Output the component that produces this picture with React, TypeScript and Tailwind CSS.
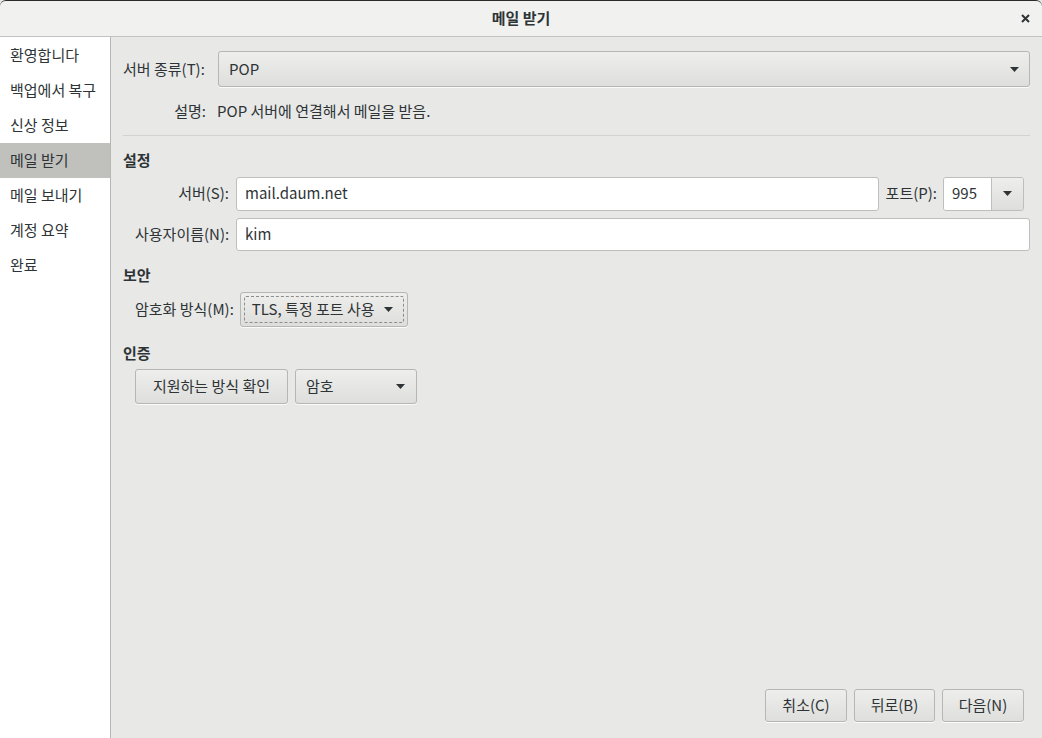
import React from 'react';

const Arrow: React.FC = () => (
  <svg width="9" height="5" viewBox="0 0 9 5" className="shrink-0">
    <path d="M0 0h9L4.5 5z" fill="#2e3436" />
  </svg>
);

const btn =
  'border border-[#b6b6b3] rounded-[3px] bg-gradient-to-b from-[#eeeeec] to-[#dededc] shadow-[0_1px_0_rgba(255,255,255,0.8)]';

const sideItems = ['환영합니다', '백업에서 복구', '신상 정보', '메일 받기', '메일 보내기', '계정 요약', '완료'];

const Sidebar: React.FC = () => (
  <div className="w-[111px] shrink-0 bg-white border-r border-[#b6b6b3] pt-[1px]">
    {sideItems.map(item => (
      <div
        key={item}
        className={`h-[35px] pl-[10px] flex items-center whitespace-nowrap ${item === '메일 받기' ? 'bg-[#c0c0bd]' : ''}`}
      >
        {item}
      </div>
    ))}
  </div>
);

const App: React.FC = () => {
  return (
    <div
      className="w-[1042px] h-[738px] flex flex-col bg-[#e8e8e7] text-[#2e3436] text-[15px] overflow-hidden"
      style={{ fontFamily: '"Noto Sans CJK KR", "Noto Sans", sans-serif' }}
    >
      <div className="h-[37px] shrink-0 bg-[#f1f1f0] border-t border-[#2b2b2b] rounded-t-[6px] border-b border-b-[#c2c2bf] grid grid-cols-[1fr_auto_1fr] items-center">
        <div />
        <div className="font-bold">메일 받기</div>
        <div className="flex justify-end pr-[12px]">
          <svg width="9" height="9" viewBox="0 0 9 9">
            <path d="M1 1l7 7M8 1L1 8" stroke="#2e3436" strokeWidth="2" />
          </svg>
        </div>
      </div>

      <div className="flex flex-1 min-h-0">
        <Sidebar />

        <main className="flex-1 flex flex-col pl-[12px] pr-[12px] pt-[14px] pb-[16px]">
          <div className="grid grid-cols-[83px_1fr] gap-x-[12px] items-center">
            <div className="whitespace-nowrap">서버 종류(T):</div>
            <div className={`${btn} h-[36px] flex items-center justify-between pl-[10px] pr-[10px]`}>
              <span>POP</span>
              <Arrow />
            </div>
            <div className="text-right mt-[13px]">설명:</div>
            <div className="mt-[13px] -ml-[1px]">POP 서버에 연결해서 메일을 받음.</div>
          </div>

          <div className="mt-[12px] h-px bg-[#d2d2cf]" />

          <div className="font-bold mt-[12px] leading-[24px]">설정</div>
          <div className="pl-[12px] mt-[5px] flex flex-col gap-[7px]">
            <div className="flex items-center">
              <div className="w-[94px] text-right shrink-0 whitespace-nowrap">서버(S):</div>
              <div className="ml-[7px] flex-1 h-[34px] bg-white border border-[#bebebb] rounded-[3px] flex items-center pl-[8px]">
                mail.daum.net
              </div>
              <div className="ml-[7px] whitespace-nowrap">포트(P):</div>
              <div className="ml-[6px] mr-[6px] w-[81px] h-[34px] flex border border-[#bebebb] rounded-[3px] overflow-hidden">
                <div className="w-[47px] bg-white flex items-center pl-[8px]">995</div>
                <div className="flex-1 border-l border-[#bebebb] bg-gradient-to-b from-[#eeeeec] to-[#dededc] flex items-center justify-center">
                  <Arrow />
                </div>
              </div>
            </div>
            <div className="flex items-center">
              <div className="w-[94px] text-right shrink-0 whitespace-nowrap">사용자이름(N):</div>
              <div className="ml-[7px] flex-1 h-[33px] bg-white border border-[#bebebb] rounded-[3px] flex items-center pl-[8px]">
                kim
              </div>
            </div>
          </div>

          <div className="font-bold mt-[12px] leading-[24px]">보안</div>
          <div className="pl-[12px] mt-[5px] flex items-center">
            <div className="whitespace-nowrap">암호화 방식(M):</div>
            <div className={`${btn} ml-[6px] h-[35px] w-[168px] p-[3px]`}>
              <div className="h-full border border-dashed border-[#8d8d8b] rounded-[2px] flex items-center justify-between pl-[7px] pr-[10px]">
                <span className="whitespace-nowrap">TLS, 특정 포트 사용</span>
                <Arrow />
              </div>
            </div>
          </div>

          <div className="font-bold mt-[14px] leading-[24px]">인증</div>
          <div className="pl-[12px] mt-[4px] flex items-center gap-[7px]">
            <div className={`${btn} h-[35px] w-[153px] flex items-center justify-center`}>지원하는 방식 확인</div>
            <div className={`${btn} h-[35px] w-[122px] flex items-center justify-between pl-[10px] pr-[11px]`}>
              <span>암호</span>
              <Arrow />
            </div>
          </div>

          <div className="flex-1" />

          <div className="flex justify-end gap-[7px] pr-[6px]">
            <div className={`${btn} h-[33px] w-[82px] flex items-center justify-center`}>취소(C)</div>
            <div className={`${btn} h-[33px] w-[81px] flex items-center justify-center`}>뒤로(B)</div>
            <div className={`${btn} h-[33px] w-[82px] flex items-center justify-center`}>다음(N)</div>
          </div>
        </main>
      </div>
    </div>
  );
};

export default App;
